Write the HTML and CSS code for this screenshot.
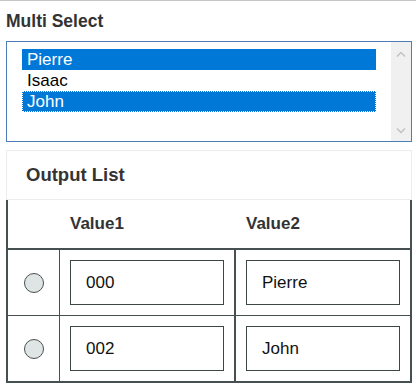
FILE: index.html
```html
<!DOCTYPE html>
<html lang="en">
<head>
<meta charset="utf-8">
<title>Multi Select</title>
<link rel="stylesheet" href="styles.css">
</head>
<body>
<div class="topline"></div>
<div class="page">
	<div class="label">Multi Select</div>
	<div class="listbox" role="listbox" aria-multiselectable="true">
		<div class="options">
			<div class="opt sel">Pierre</div>
			<div class="opt">Isaac</div>
			<div class="opt sel focus">John</div>
		</div>
		<div class="scroll">
			<svg width="10" height="6" viewBox="0 0 10 6"><polyline points="1,5.5 5,1.5 9,5.5" fill="none" stroke="#c2c2c2" stroke-width="1.5"/></svg>
			<svg width="10" height="6" viewBox="0 0 10 6"><polyline points="1,0.5 5,4.5 9,0.5" fill="none" stroke="#c2c2c2" stroke-width="1.5"/></svg>
		</div>
	</div>

	<div class="panel">
		<div class="panel-head">Output List</div>
		<div class="table">
			<div class="thead">
				<div class="th th-radio"></div>
				<div class="th th-v1">Value1</div>
				<div class="th th-v2">Value2</div>
			</div>
			<div class="row">
				<div class="cell cell-radio"><input type="radio" name="out" class="radio"></div>
				<div class="cell cell-v1"><input type="text" class="field" value="000"></div>
				<div class="cell cell-v2"><input type="text" class="field" value="Pierre"></div>
			</div>
			<div class="row last">
				<div class="cell cell-radio"><input type="radio" name="out" class="radio"></div>
				<div class="cell cell-v1"><input type="text" class="field" value="002"></div>
				<div class="cell cell-v2"><input type="text" class="field" value="John"></div>
			</div>
		</div>
	</div>
</div>
</body>
</html>
```

FILE: styles.css
```css
* {
	box-sizing: border-box;
}
body {
	margin: 0;
	font-family: "Liberation Sans", Arial, sans-serif;
	color: #111;
	background: #fff;
}
.topline {
	height: 1px;
	background: #c6c6c6;
}
.page {
	width: 406px;
	margin-left: 6px;
}
.label {
	margin-top: 11px;
	font-size: 17.5px;
	line-height: 19px;
	font-weight: bold;
	color: #333;
}

/* listbox */
.listbox {
	margin-top: 10px;
	height: 101px;
	border: 1px solid #4e7cb9;
	display: flex;
}
.options {
	flex: 1;
	padding: 7px 15px 0 15px;
}
.opt {
	height: 21px;
	line-height: 21px;
	padding-left: 5px;
	font-size: 17px;
	color: #000;
}
.opt.sel {
	background: #0078d7;
	color: #fff;
}
.opt.focus {
	outline: 1px dotted #fff;
	outline-offset: -1px;
}
.scroll {
	width: 20px;
	background: #f0f0f0;
	display: flex;
	flex-direction: column;
	justify-content: space-between;
	align-items: center;
	padding: 9px 0 7px 0;
}
.scroll svg {
	display: block;
}

/* output panel */
.panel {
	margin-top: 8px;
}
.panel-head {
	height: 50px;
	border: 1px solid #ececec;
	padding-left: 19px;
	display: flex;
	align-items: center;
	font-size: 18.5px;
	font-weight: bold;
	color: #333;
}
.table {
	border-left: 2px solid #465050;
	border-right: 2px solid #465050;
	border-bottom: 2px solid #465050;
}
.thead {
	display: flex;
	height: 50px;
	border-bottom: 2px solid #465050;
	align-items: center;
	font-size: 17px;
	font-weight: bold;
	color: #333;
}
.th-radio {
	width: 52px;
}
.th-v1 {
	width: 176px;
	padding-left: 10px;
}
.th-v2 {
	width: 174px;
	padding-left: 10px;
}
.row {
	display: flex;
	border-bottom: 1px solid #465050;
}
.row.last {
	border-bottom: none;
}
.cell {
	padding: 10px;
}
.cell-radio {
	width: 52px;
	border-right: 1px solid #465050;
	display: flex;
	align-items: center;
	justify-content: center;
	padding: 0;
}
.cell-v1 {
	width: 176px;
	border-right: 2px solid #465050;
}
.cell-v2 {
	width: 174px;
}
.field {
	display: block;
	width: 154px;
	height: 45px;
	margin: 0;
	border: 1px solid #3c4646;
	border-radius: 0;
	padding: 0 15px;
	font-family: "Liberation Sans", Arial, sans-serif;
	font-size: 17px;
	color: #111;
	background: #fff;
}
.radio {
	appearance: none;
	-webkit-appearance: none;
	width: 20px;
	height: 20px;
	margin: 0;
	border: 1.5px solid #4a4f4f;
	border-radius: 50%;
	background: #dfe4e4;
}
```
